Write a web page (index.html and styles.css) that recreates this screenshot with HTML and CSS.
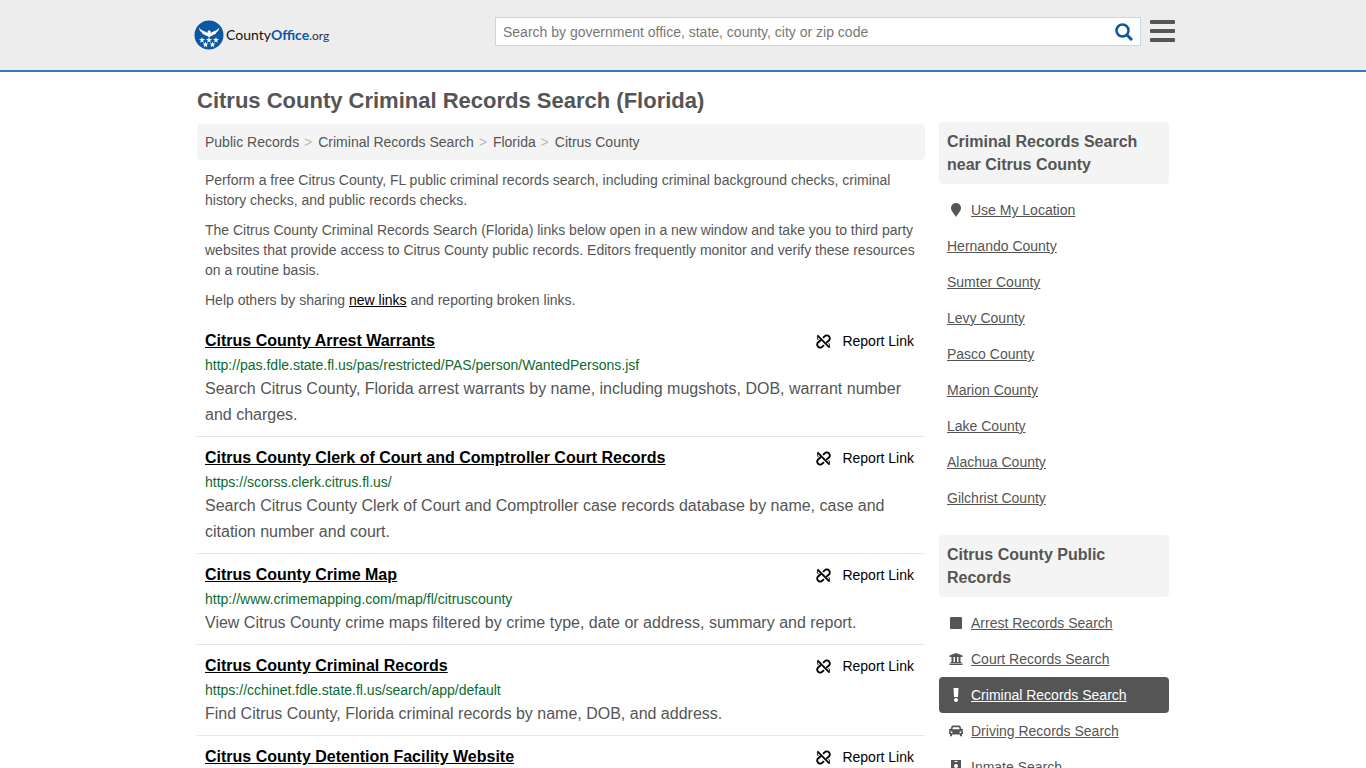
FILE: index.html
```
<!DOCTYPE html>
<html lang="en">
  <head>
    <meta charset="UTF-8" />
    <meta name="viewport" content="width=device-width, initial-scale=1" />
    <title>Citrus County Criminal Records Search (Florida)</title>
    <link rel="stylesheet" href="styles.css">
  </head>

  <body>
    <!-- shared icons -->
    <svg class="sprite" aria-hidden="true">
      <symbol id="broken" viewBox="0 0 16 16">
        <g fill="none" stroke="currentColor" stroke-width="2">
          <path d="M1.500 1.500l13 13" />
          <path d="M7.500 4.200l1.700-1.700a3 3 0 0 1 4.600 0 3 3 0 0 1 0 4.400l-3 2.600" />
          <path d="M8.500 11.800l-1.700 1.700a3 3 0 0 1-4.600 0 3 3 0 0 1 0-4.400l3.300-3" />
          <path d="M2.200 2.500a3 3 0 0 0 .3 4M13.500 9.800a3 3 0 0 1 .6 3.500" stroke-width="1" />
        </g>
      </symbol>
      <symbol id="star" viewBox="0 0 10 10">
        <path fill="#fff" d="M5 0l1.300 3.500H10L7 5.800 8.100 9.500 5 7.300 1.900 9.500 3 5.800 0 3.500h3.700z" />
      </symbol>
    </svg>

    <header class="header">
      <div class="container header-row">
        <a class="logo" href="#">
          <svg width="30" height="30" viewBox="0 0 30 30" aria-hidden="true">
            <circle cx="15" cy="15" r="14.500" fill="#0b57a4" />
            <path fill="#fff" d="M5 7.500c1.500 2.500 4 3.500 6.500 4.200l2 1.300.3-2 1.200-.8 1.500.8.200 2 2-1.300c2.500-.7 5-1.700 6.500-4.200-.2 2.300-1.200 3.800-2.600 4.800-.6 1.400-1.800 2.200-3.200 2.500-.8.900-1.700 1.200-2.600 1.200L15.200 17.500 13.500 16c-.9 0-1.800-.3-2.600-1.200-1.400-.3-2.600-1.100-3.200-2.500C6.200 11.300 5.200 9.800 5 7.500z" />
            <use href="#star" x="5" y="17" width="6" height="6" />
            <use href="#star" x="12" y="17" width="6" height="6" />
            <use href="#star" x="19" y="17" width="6" height="6" />
            <use href="#star" x="8.500" y="21.500" width="6" height="6" />
            <use href="#star" x="15.500" y="21.500" width="6" height="6" />
          </svg>
          <span>County<b>Office</b><small>.org</small></span>
        </a>
        <form class="search">
          <input type="text" aria-label="Search" placeholder="Search by government office, state, county, city or zip code" />
          <button type="button" aria-label="Search">
            <svg width="18" height="18" viewBox="0 0 18 18" fill="none" stroke="#0b57a4">
              <circle cx="7.500" cy="7.500" r="6" stroke-width="2.500" />
              <path d="M12 12l5 5" stroke-width="3" />
            </svg>
          </button>
        </form>
        <button class="menu" type="button" aria-label="Menu">
          <span></span><span></span><span></span>
        </button>
      </div>
    </header>

    <div class="container page">
      <main class="main">
        <h1>Citrus County Criminal Records Search (Florida)</h1>
        <nav class="crumbs">
          <a href="#">Public Records</a>
          <a href="#">Criminal Records Search</a>
          <a href="#">Florida</a>
          <a href="#">Citrus County</a>
        </nav>
        <div class="intro">
          <p>Perform a free Citrus County, FL public criminal records search, including criminal background checks, criminal history checks, and public records checks.</p>
          <p>The Citrus County Criminal Records Search (Florida) links below open in a new window and take you to third party websites that provide access to Citrus County public records. Editors frequently monitor and verify these resources on a routine basis.</p>
          <p>Help others by sharing <a href="#">new links</a> and reporting broken links.</p>
        </div>

        <div class="record">
          <div class="record-top">
            <a class="title" href="#">Citrus County Arrest Warrants</a>
            <a class="report" href="#"><svg><use href="#broken" /></svg>Report Link</a>
          </div>
          <div class="url">http://pas.fdle.state.fl.us/pas/restricted/PAS/person/WantedPersons.jsf</div>
          <p>Search Citrus County, Florida arrest warrants by name, including mugshots, DOB, warrant number and charges.</p>
        </div>
        <div class="record">
          <div class="record-top">
            <a class="title" href="#">Citrus County Clerk of Court and Comptroller Court Records</a>
            <a class="report" href="#"><svg><use href="#broken" /></svg>Report Link</a>
          </div>
          <div class="url">https://scorss.clerk.citrus.fl.us/</div>
          <p>Search Citrus County Clerk of Court and Comptroller case records database by name, case and citation number and court.</p>
        </div>
        <div class="record">
          <div class="record-top">
            <a class="title" href="#">Citrus County Crime Map</a>
            <a class="report" href="#"><svg><use href="#broken" /></svg>Report Link</a>
          </div>
          <div class="url">http://www.crimemapping.com/map/fl/citruscounty</div>
          <p>View Citrus County crime maps filtered by crime type, date or address, summary and report.</p>
        </div>
        <div class="record">
          <div class="record-top">
            <a class="title" href="#">Citrus County Criminal Records</a>
            <a class="report" href="#"><svg><use href="#broken" /></svg>Report Link</a>
          </div>
          <div class="url">https://cchinet.fdle.state.fl.us/search/app/default</div>
          <p>Find Citrus County, Florida criminal records by name, DOB, and address.</p>
        </div>
        <div class="record">
          <div class="record-top">
            <a class="title" href="#">Citrus County Detention Facility Website</a>
            <a class="report" href="#"><svg><use href="#broken" /></svg>Report Link</a>
          </div>
        </div>
      </main>

      <aside class="side">
        <section>
          <h2>Criminal Records Search near Citrus County</h2>
          <ul>
            <li><svg viewBox="0 0 14 14"><path d="M7 0a5 5 0 0 1 5 5c0 3-3 5.500-5 9-2-3.500-5-6-5-9a5 5 0 0 1 5-5z" /></svg><a href="#">Use My Location</a></li>
            <li><a href="#">Hernando County</a></li>
            <li><a href="#">Sumter County</a></li>
            <li><a href="#">Levy County</a></li>
            <li><a href="#">Pasco County</a></li>
            <li><a href="#">Marion County</a></li>
            <li><a href="#">Lake County</a></li>
            <li><a href="#">Alachua County</a></li>
            <li><a href="#">Gilchrist County</a></li>
          </ul>
        </section>
        <section>
          <h2>Citrus County Public Records</h2>
          <ul>
            <li><svg viewBox="0 0 14 14"><rect x="1" y="1" width="12" height="12" rx="1" /></svg><a href="#">Arrest Records Search</a></li>
            <li><svg viewBox="0 0 14 14"><path d="M7 1l6.500 2.500V5H.5V3.500zM2.500 5h2v5h-2zM6 5h2v5H6zM9.500 5h2v5h-2zM1.500 10h11v1h-11zM.5 11.500h13V13H.5z" /></svg><a href="#">Court Records Search</a></li>
            <li class="active"><svg viewBox="0 0 14 14"><path d="M4.500 0h5L9 9H5z" /><circle cx="7" cy="12" r="2" /></svg><a href="#">Criminal Records Search</a></li>
            <li><svg viewBox="0 0 14 14"><path fill-rule="evenodd" d="M4 1.500h6c.8 0 1.300.4 1.600 1.200L12.400 5H14v1h-.8c.5.4.8 1 .8 1.700V10h-1v1.500a1 1 0 0 1-2 0V10.500H3v1a1 1 0 0 1-2 0V10H0V7.700C0 7 .3 6.400.8 6H0V5h1.600l.8-2.300C2.700 1.900 3.200 1.500 4 1.500zM4 3.200L3.300 5.200h7.400L10 3.200zM2.500 7.200a1 1 0 1 0 0 2 1 1 0 0 0 0-2zM11.500 7.200a1 1 0 1 0 0 2 1 1 0 0 0 0-2z" /></svg><a href="#">Driving Records Search</a></li>
            <li><svg viewBox="0 0 14 14"><path fill-rule="evenodd" d="M2 0h10v14H2zM5.500 1v1h3V1zM7 4a2 2 0 1 0 0 4 2 2 0 0 0 0-4zM4 11h6c0-1.500-1-2-3-2s-3 .5-3 2z" /></svg><a href="#">Inmate Search</a></li>
          </ul>
        </section>
      </aside>
    </div>
  </body>
</html>
```
FILE: styles.css
```
* {
  box-sizing: border-box;
}

body {
  margin: 0;
  font-family: Arial, "Liberation Sans", sans-serif;
  font-size: 14px;
  line-height: 20px;
  color: #555;
  background: #fff;
}

a {
  color: inherit;
}

p,
ul {
  margin: 0;
  padding: 0;
}

button {
  padding: 0;
  border: 0;
  background: none;
  cursor: pointer;
}

.sprite {
  display: none;
}

.container {
  max-width: 972px;
  margin: 0 auto;
}

/* header */

.header {
  background: #ededed;
  border-bottom: 2px solid #337ab7;
}

.header-row {
  display: flex;
  align-items: flex-start;
  height: 70px;
  padding-top: 17px;
}

.logo {
  display: flex;
  align-items: center;
  gap: 2px;
  width: 301px;
  margin-left: -3px;
  padding-top: 3px;
  font-family: Lato, sans-serif;
  font-size: 14px;
  color: #111;
  text-decoration: none;
}

.logo b {
  color: #0b57a4;
}

.logo small {
  font-size: 12px;
  color: #333;
}

.search {
  display: flex;
  flex: 1;
  height: 29px;
  border: 1px solid #c3d9e9;
  background: #fff;
}

.search input {
  flex: 1;
  min-width: 0;
  padding: 0 7px;
  border: 0;
  outline: 0;
  background: none;
  font: inherit;
}

.search input::placeholder {
  color: #777;
}

.search button {
  display: flex;
  align-items: center;
  justify-content: center;
  width: 32px;
}

.menu {
  display: flex;
  flex-direction: column;
  gap: 5px;
  width: 25px;
  margin: 3px -6px 0 9px;
}

.menu span {
  width: 25px;
  height: 4px;
  border-radius: 1px;
  background: #555;
}

/* columns */

.page {
  display: flex;
  gap: 14px;
}

.main {
  flex: 1;
  min-width: 0;
}

.side {
  width: 230px;
  padding-top: 50px;
}

h1 {
  margin: 16px 0 10px;
  font-size: 22px;
  line-height: 26px;
}

.crumbs {
  padding: 8px;
  border-radius: 4px;
  background: #f4f4f4;
}

.crumbs a {
  text-decoration: none;
}

.crumbs a + a::before {
  content: ">";
  margin-right: 6px;
  margin-left: 1px;
  color: #bbb;
}

.intro {
  padding: 0 8px;
}

.intro p {
  margin: 10px 0;
}

.intro a {
  color: #000;
}

.record {
  padding: 8px;
  border-bottom: 1px solid #e8e8e8;
}

.record-top {
  display: flex;
  justify-content: space-between;
  line-height: 26px;
  color: #000;
}

.title {
  font-size: 16px;
  font-weight: bold;
}

.report {
  display: flex;
  align-items: center;
  gap: 11px;
  margin-right: 3px;
  text-decoration: none;
}

.report svg {
  width: 15px;
  height: 15px;
}

.url {
  line-height: 22px;
  color: #0a6b2d;
}

.record p {
  font-size: 16px;
  line-height: 26px;
}

/* sidebar */

.side section {
  margin-bottom: 19px;
}

.side h2 {
  margin: 0 0 8px;
  padding: 8px;
  border-radius: 4px;
  background: #f4f4f4;
  font-size: 16px;
  line-height: 23px;
}

.side li {
  display: flex;
  align-items: center;
  gap: 8px;
  padding: 8px;
  border-radius: 4px;
}

.side li svg {
  width: 14px;
  height: 14px;
  margin-left: 2px;
  fill: currentColor;
}

.side li.active {
  background: #555;
  color: #fff;
}
```
